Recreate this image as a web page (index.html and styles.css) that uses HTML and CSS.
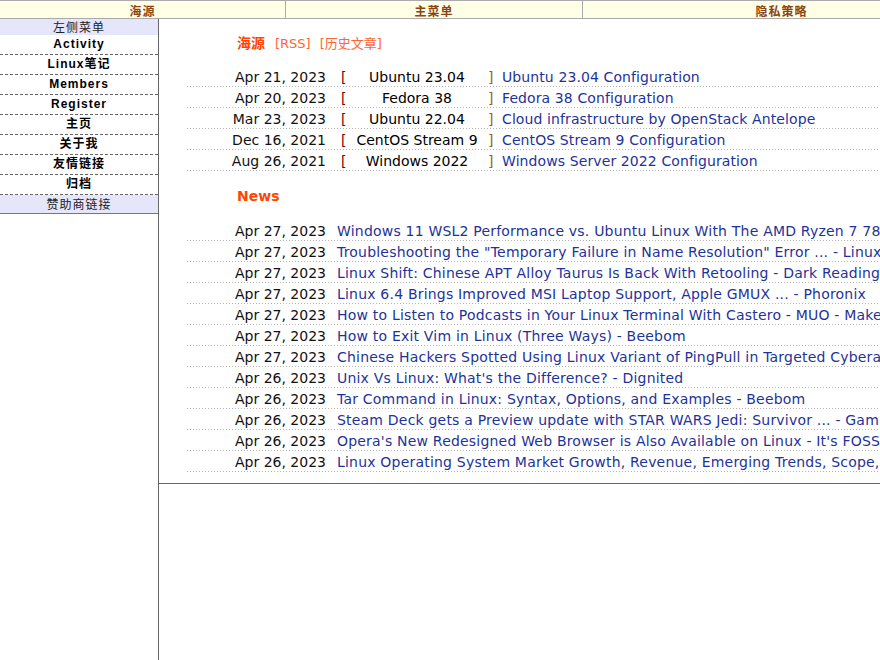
FILE: index.html
```html
<!DOCTYPE html>
<html lang="zh">
<head>
<meta charset="utf-8">
<title>海源</title>
<link rel="stylesheet" href="styles.css">
</head>
<body>
<div class="wrap">
  <div class="topbar">
    <div class="tcell c1">海源</div>
    <div class="tcell c2">主菜单</div>
    <div class="tcell c3">隐私策略</div>
  </div>
  <div class="page">
    <div class="side">
      <div class="side-head">左侧菜单</div>
      <a class="side-item" href="#">Activity</a>
      <a class="side-item" href="#">Linux笔记</a>
      <a class="side-item" href="#">Members</a>
      <a class="side-item" href="#">Register</a>
      <a class="side-item" href="#">主页</a>
      <a class="side-item" href="#">关于我</a>
      <a class="side-item" href="#">友情链接</a>
      <a class="side-item" href="#">归档</a>
      <div class="side-foot">赞助商链接</div>
    </div>
    <div class="main">
      <div class="title"><span class="site">海源</span><a class="tlink" href="#">[RSS]</a><a class="tlink" href="#">[历史文章]</a></div>
      <div class="list first">
        <div class="row"><span class="date">Apr 21, 2023</span><span class="lb">[</span><span class="os">Ubuntu 23.04</span><span class="rb">]</span><a class="link" href="#">Ubuntu 23.04 Configuration</a></div>
        <div class="row"><span class="date">Apr 20, 2023</span><span class="lb">[</span><span class="os">Fedora 38</span><span class="rb">]</span><a class="link" href="#">Fedora 38 Configuration</a></div>
        <div class="row"><span class="date">Mar 23, 2023</span><span class="lb">[</span><span class="os">Ubuntu 22.04</span><span class="rb">]</span><a class="link" href="#">Cloud infrastructure by OpenStack Antelope</a></div>
        <div class="row"><span class="date">Dec 16, 2021</span><span class="lb">[</span><span class="os">CentOS Stream 9</span><span class="rb">]</span><a class="link" href="#">CentOS Stream 9 Configuration</a></div>
        <div class="row"><span class="date">Aug 26, 2021</span><span class="lb">[</span><span class="os">Windows 2022</span><span class="rb">]</span><a class="link" href="#">Windows Server 2022 Configuration</a></div>
      </div>
      <div class="news">News</div>
      <div class="list second">
        <div class="row"><span class="date">Apr 27, 2023</span><a class="link nl" href="#">Windows 11 WSL2 Performance vs. Ubuntu Linux With The AMD Ryzen 7 7800X3D - Phoronix</a></div>
        <div class="row"><span class="date">Apr 27, 2023</span><a class="link nl" href="#">Troubleshooting the "Temporary Failure in Name Resolution" Error ... - Linux Journal</a></div>
        <div class="row"><span class="date">Apr 27, 2023</span><a class="link nl" href="#">Linux Shift: Chinese APT Alloy Taurus Is Back With Retooling - Dark Reading</a></div>
        <div class="row"><span class="date">Apr 27, 2023</span><a class="link nl" href="#">Linux 6.4 Brings Improved MSI Laptop Support, Apple GMUX ... - Phoronix</a></div>
        <div class="row"><span class="date">Apr 27, 2023</span><a class="link nl" href="#">How to Listen to Podcasts in Your Linux Terminal With Castero - MUO - MakeUseOf</a></div>
        <div class="row"><span class="date">Apr 27, 2023</span><a class="link nl" href="#">How to Exit Vim in Linux (Three Ways) - Beebom</a></div>
        <div class="row"><span class="date">Apr 27, 2023</span><a class="link nl" href="#">Chinese Hackers Spotted Using Linux Variant of PingPull in Targeted Cyberattacks - The Hacker News</a></div>
        <div class="row"><span class="date">Apr 26, 2023</span><a class="link nl" href="#">Unix Vs Linux: What's the Difference? - Dignited</a></div>
        <div class="row"><span class="date">Apr 26, 2023</span><a class="link nl" href="#">Tar Command in Linux: Syntax, Options, and Examples - Beebom</a></div>
        <div class="row"><span class="date">Apr 26, 2023</span><a class="link nl" href="#">Steam Deck gets a Preview update with STAR WARS Jedi: Survivor ... - GamingOnLinux</a></div>
        <div class="row"><span class="date">Apr 26, 2023</span><a class="link nl" href="#">Opera's New Redesigned Web Browser is Also Available on Linux - It's FOSS</a></div>
        <div class="row"><span class="date">Apr 26, 2023</span><a class="link nl" href="#">Linux Operating System Market Growth, Revenue, Emerging Trends, Scope, ...</a></div>
      </div>
    </div>
  </div>
</div>
</body>
</html>
```
FILE: styles.css
```css
html, body {
  margin: 0;
  padding: 0;
  overflow: hidden;
  background: #fff;
}
body {
  font-family: "Liberation Sans", "Noto Sans CJK SC", sans-serif;
  color: #111;
}
a { text-decoration: none; }

.wrap {
  width: 980px;
}

/* top bar */
.topbar {
  display: flex;
  background: #ffffe8;
  border-top: 1px solid #aaa;
  border-bottom: 1px solid #aaa;
  height: 17px;
}
.tcell {
  font-size: 12px;
  font-weight: bold;
  color: #8b4513;
  letter-spacing: 1px;
  text-align: center;
  line-height: 14px;
  padding-top: 4px;
  box-sizing: border-box;
  height: 17px;
  overflow: hidden;
}
.c1 { width: 286px; border-right: 1px solid #aaa; }
.c2 { width: 297px; border-right: 1px solid #aaa; }
.c3 { flex: 1; }

/* page */
.page {
  display: flex;
  min-height: calc(100vh - 19px);
}
.side {
  width: 158px;
  flex: none;
  border-right: 1px solid #666;
}
.side-head {
  background: #e6e6fa;
  height: 14px;
  padding-top: 2px;
  line-height: 15px;
  font-size: 12px;
  color: #222;
  text-align: center;
  letter-spacing: 1px;
}
.side-item {
  display: block;
  height: 19px;
  line-height: 19px;
  border-bottom: 1px dashed #666;
  font-size: 12px;
  font-weight: bold;
  color: #000;
  text-align: center;
  letter-spacing: 1px;
}
.side-foot {
  background: #e6e6fa;
  height: 16px;
  padding-top: 2px;
  line-height: 17px;
  border-bottom: 1px solid #777;
  font-size: 12px;
  color: #222;
  text-align: center;
  letter-spacing: 1px;
}

.main {
  flex: 1;
  align-self: flex-start;
  border-bottom: 1px solid #666;
  padding: 14px 0 11px 28px;
  font-family: "DejaVu Sans", "Noto Sans CJK SC", sans-serif;
}

.title {
  margin-left: 50px;
  height: 20px;
  line-height: 20px;
  white-space: nowrap;
}
.site {
  font-size: 14px;
  font-weight: bold;
  color: #ff4500;
}
.tlink {
  font-size: 13px;
  color: #ff6633;
  margin-left: 10px;
}
.tlink + .tlink {
  margin-left: 9px;
}

.list.first { margin-top: 13px; }
.list.second { margin-top: 14px; }

.row {
  display: flex;
  white-space: nowrap;
  height: 20px;
  padding-bottom: 1px;
  line-height: 22px;
  font-size: 14px;
  background-image: linear-gradient(to right, #b4b4b4 1px, transparent 1px);
  background-size: 3px 1px;
  background-repeat: repeat-x;
  background-position: 0 100%;
}
.date {
  width: 139px;
  flex: none;
  text-align: right;
  color: #111;
}
.lb {
  width: 5px;
  flex: none;
  margin-left: 15px;
  color: #800000;
}
.os {
  width: 142px;
  flex: none;
  text-align: center;
  color: #000;
}
.rb {
  width: 5px;
  flex: none;
  color: #996600;
}
.link {
  margin-left: 9px;
  letter-spacing: 0.1px;
  color: #1e3399;
}
.link.nl {
  margin-left: 11px;
  letter-spacing: 0.2px;
}

.news {
  margin: 15px 0 0 50px;
  height: 20px;
  line-height: 20px;
  font-size: 14px;
  font-weight: bold;
  color: #ff4500;
}
```
